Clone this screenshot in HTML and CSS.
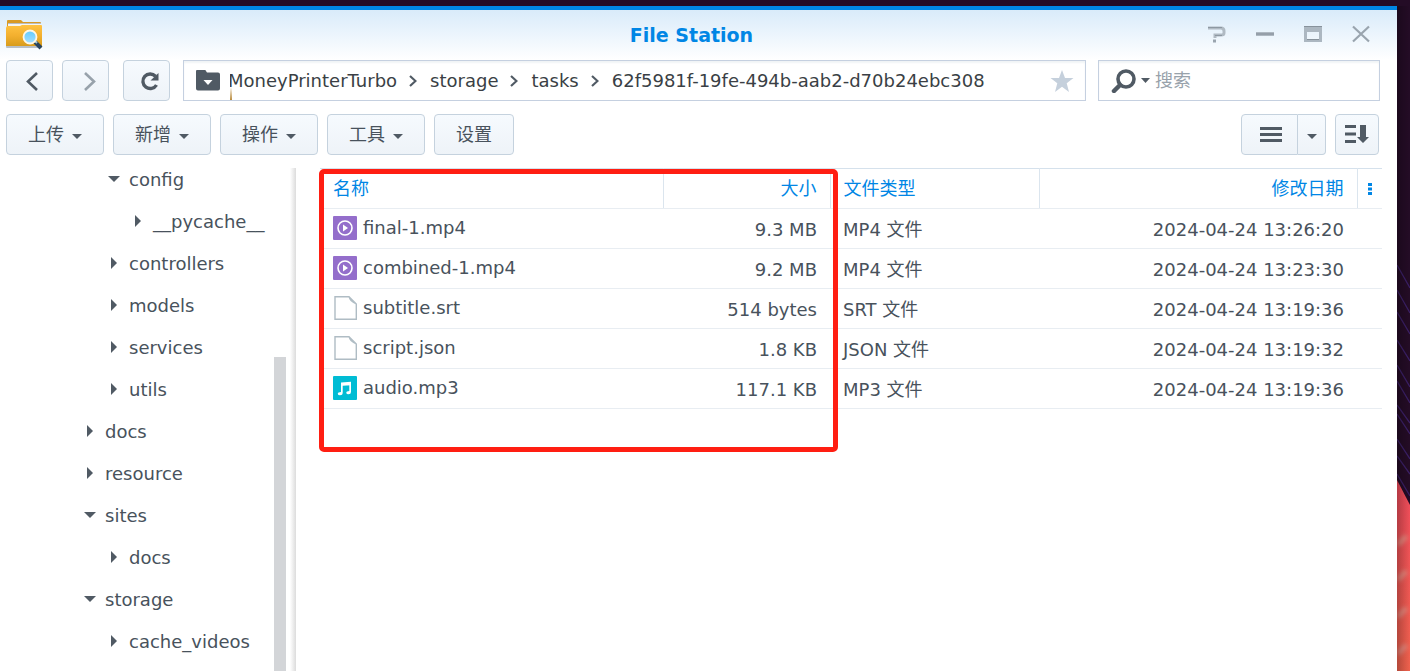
FILE: index.html
```html
<!DOCTYPE html>
<html lang="zh-CN">
<head>
<meta charset="utf-8">
<title>File Station</title>
<link rel="stylesheet" href="styles.css">
</head>
<body>
<div class="window">
  <header class="titlebar">
    <svg class="app-icon" width="38" height="34" viewBox="0 0 38 34">
      <defs>
        <linearGradient id="folder" x1="0" y1="0" x2="0" y2="1"><stop offset="0" stop-color="#ffc241"/><stop offset=".5" stop-color="#f3b02f"/><stop offset="1" stop-color="#d89c1c"/></linearGradient>
        <linearGradient id="lens" x1="0" y1="0" x2="0" y2="1"><stop offset="0" stop-color="#61caff"/><stop offset="1" stop-color="#a5dfff"/></linearGradient>
      </defs>
      <rect x="0" y="27" width="36" height="3" rx="1" fill="#8f97a0" opacity=".6"/>
      <path d="M1 3q0-1 1-1h13l2 2h17q1 0 1 1v6H1z" fill="#d99a24"/>
      <path d="M2 5h33v5H2z" fill="#b9bdc0"/><path d="M2 6h33v4H2z" fill="#f5f5f3"/>
      <path d="M0 10q0-2 2-2h12l2-1h19q1 0 1 1v20H0z" fill="url(#folder)"/>
      <path d="M29 24l6 6" stroke="#29445c" stroke-width="4"/>
      <path d="M28 22l3 3" stroke="#9fc7d4" stroke-width="2"/>
      <circle cx="24" cy="19" r="6.500" fill="url(#lens)" stroke="#fff7e5" stroke-width="1.800"/>
    </svg>
    <h1 class="title">File Station</h1>
    <div class="win-controls">
      <button aria-label="帮助"><svg width="20" height="20" viewBox="0 0 20 20"><path d="M1 3h13q3 0 3 3v2q0 2-3 2H8v3" fill="none" stroke="#b0bac3" stroke-width="3"/><path d="M6 14.500h3v3H6z" fill="#9aa5af"/><path d="M1 2.500h14M8 10.500h7" stroke="#8d98a2" stroke-width="1"/></svg></button>
      <button aria-label="最小化"><svg width="20" height="20" viewBox="0 0 20 20"><path d="M1 9h18" stroke="#aeb8c1" stroke-width="4"/><path d="M1 9h18" stroke="#8c97a1" stroke-width="1.500"/></svg></button>
      <button aria-label="最大化"><svg width="20" height="20" viewBox="0 0 20 20"><path d="M1 1h18v16H1zM4 7v7h12V7z" fill="#acb7c1" fill-rule="evenodd"/><path d="M1 1.500h18M4 14.500h12" stroke="#87929c"/></svg></button>
      <button aria-label="关闭"><svg width="20" height="20" viewBox="0 0 20 20"><path d="M2 1.500l16 15M18 1.500l-16 15" stroke="#99a4ae" stroke-width="2.200"/></svg></button>
    </div>
  </header>

  <nav class="navbar">
    <button class="btn square" aria-label="后退"><svg width="20" height="20" viewBox="0 0 20 20"><path d="M17 2l-9 8.500 9 8.500" fill="none" stroke="#505a64" stroke-width="2.600"/></svg></button>
    <button class="btn square" aria-label="前进"><svg width="20" height="20" viewBox="0 0 20 20"><path d="M9 2l9 8.500-9 8.500" fill="none" stroke="#98a2ab" stroke-width="2.600"/></svg></button>
    <button class="btn square reload" aria-label="刷新"><svg width="20" height="20" viewBox="0 0 20 20"><path d="M15.500 5.200A7.300 7.300 0 1 0 16.500 14" fill="none" stroke="#505a64" stroke-width="3.400"/><path d="M18.500 2v7.500h-8z" fill="#505a64"/></svg></button>
    <div class="path">
      <svg class="path-icon" width="24" height="22" viewBox="0 0 24 22"><path d="M0 1.500q0-2 2-2h7l2 3h11q2 0 2 2v14q0 2-2 2H2q-2 0-2-2z" fill="#505a64"/><path d="M7.500 10h9L12 15z" fill="#fff"/></svg>
      <div class="crumbs">
        <a href="#" class="first">MoneyPrinterTurbo</a>
        <svg class="chev" width="8" height="12" viewBox="0 0 8 12"><path d="M1 1l5.500 5L1 11" fill="none" stroke="#505a64" stroke-width="2.200"/></svg>
        <a href="#">storage</a>
        <svg class="chev" width="8" height="12" viewBox="0 0 8 12"><path d="M1 1l5.500 5L1 11" fill="none" stroke="#505a64" stroke-width="2.200"/></svg>
        <a href="#">tasks</a>
        <svg class="chev" width="8" height="12" viewBox="0 0 8 12"><path d="M1 1l5.500 5L1 11" fill="none" stroke="#505a64" stroke-width="2.200"/></svg>
        <a href="#">62f5981f-19fe-494b-aab2-d70b24ebc308</a>
      </div>
      <button class="star" aria-label="收藏"><svg width="24" height="24" viewBox="0 0 24 24"><path d="M12 1l3 8h8.500l-6.800 5.200L19 23l-7-5.200L5 23l2.300-8.800L.5 9H9z" fill="#c5d0dc"/></svg></button>
    </div>
    <div class="search">
      <svg width="26" height="24" viewBox="0 0 26 24"><circle cx="15" cy="10" r="8" fill="none" stroke="#505a64" stroke-width="3.600"/><path d="M9 16l-6 6" stroke="#505a64" stroke-width="4.500" stroke-linecap="round"/></svg>
      <svg width="9" height="5" viewBox="0 0 9 5"><path d="M0 0h9L4.500 5z" fill="#505a64"/></svg>
      <input type="text" placeholder="搜索" aria-label="搜索">
    </div>
  </nav>

  <div class="toolbar">
    <button class="btn menu">上传<i class="caret"></i></button>
    <button class="btn menu">新增<i class="caret"></i></button>
    <button class="btn menu">操作<i class="caret"></i></button>
    <button class="btn menu">工具<i class="caret"></i></button>
    <button class="btn setting">设置</button>
    <div class="split">
      <button class="btn view" aria-label="列表视图"><svg width="22" height="16" viewBox="0 0 22 16"><path d="M0 1.500h22M0 7.500h22M0 13.500h22" stroke="#505a64" stroke-width="3"/></svg></button>
      <button class="btn drop" aria-label="视图选项"><i class="caret"></i></button>
    </div>
    <button class="btn sort" aria-label="排序"><svg width="24" height="20" viewBox="0 0 24 20"><path d="M0 1.500h11M0 9h11M0 16.500h11" stroke="#505a64" stroke-width="3"/><path d="M15 0h6v12h3l-6 6-6-6h3z" fill="#505a64"/></svg></button>
  </div>

  <main class="content">
    <aside class="sidebar">
      <ul class="tree">
        <li class="l2 open"><i></i><a href="#">config</a></li>
        <li class="l3"><i></i><a href="#">__pycache__</a></li>
        <li class="l2"><i></i><a href="#">controllers</a></li>
        <li class="l2"><i></i><a href="#">models</a></li>
        <li class="l2"><i></i><a href="#">services</a></li>
        <li class="l2"><i></i><a href="#">utils</a></li>
        <li class="l1"><i></i><a href="#">docs</a></li>
        <li class="l1"><i></i><a href="#">resource</a></li>
        <li class="l1 open"><i></i><a href="#">sites</a></li>
        <li class="l2"><i></i><a href="#">docs</a></li>
        <li class="l1 open"><i></i><a href="#">storage</a></li>
        <li class="l2"><i></i><a href="#">cache_videos</a></li>
      </ul>
      <div class="scrollbar"></div>
    </aside>
    <section class="files">
      <table>
        <colgroup><col class="c-name"><col class="c-size"><col class="c-type"><col><col class="c-more"></colgroup>
        <thead>
          <tr><th>名称</th><th class="num">大小</th><th>文件类型</th><th class="num">修改日期</th><th class="more"><button aria-label="更多列"><svg width="4" height="12" viewBox="0 0 4 12"><path d="M0 0h4v3H0zM0 4.500h4v3H0zM0 9h4v3H0z" fill="#0086e5"/></svg></button></th></tr>
        </thead>
        <tbody>
          <tr><td><span class="name"><svg width="24" height="24" viewBox="0 0 24 24"><rect width="24" height="24" rx="1" fill="#946ecb"/><circle cx="12" cy="12" r="7" fill="none" stroke="#fff" stroke-width="1.600"/><path d="M10 8.500v7l5-3.500z" fill="#fff"/></svg>final-1.mp4</span></td><td class="num">9.3 MB</td><td>MP4 文件</td><td class="num" colspan="2">2024-04-24 13:26:20</td></tr>
          <tr><td><span class="name"><svg width="24" height="24" viewBox="0 0 24 24"><rect width="24" height="24" rx="1" fill="#946ecb"/><circle cx="12" cy="12" r="7" fill="none" stroke="#fff" stroke-width="1.600"/><path d="M10 8.500v7l5-3.500z" fill="#fff"/></svg>combined-1.mp4</span></td><td class="num">9.2 MB</td><td>MP4 文件</td><td class="num" colspan="2">2024-04-24 13:23:30</td></tr>
          <tr><td><span class="name"><svg width="24" height="24" viewBox="0 0 24 24"><path d="M2 .7h14l7.300 7.300v15.300H2z" fill="#fff" stroke="#afbcc4" stroke-width="1.400"/><path d="M15.500 .5Q16 6 23.500 8.500z" fill="#b0bec5"/></svg>subtitle.srt</span></td><td class="num">514 bytes</td><td>SRT 文件</td><td class="num" colspan="2">2024-04-24 13:19:36</td></tr>
          <tr><td><span class="name"><svg width="24" height="24" viewBox="0 0 24 24"><path d="M2 .7h14l7.300 7.300v15.300H2z" fill="#fff" stroke="#afbcc4" stroke-width="1.400"/><path d="M15.500 .5Q16 6 23.500 8.500z" fill="#b0bec5"/></svg>script.json</span></td><td class="num">1.8 KB</td><td>JSON 文件</td><td class="num" colspan="2">2024-04-24 13:19:32</td></tr>
          <tr><td><span class="name"><svg width="24" height="24" viewBox="0 0 24 24"><rect width="24" height="24" rx="1" fill="#00bcd4"/><path d="M8 6.500l10-.7v3.400l-8.300.6v7q0 2.500-2.700 2.500-2.200 0-2.200-1.600 0-1.700 3.200-1.700z" fill="#fff"/><path d="M16.300 8H18v8q0 2.300-2.500 2.300-2.200 0-2.200-1.600 0-1.700 3-1.700z" fill="#fff"/></svg>audio.mp3</span></td><td class="num">117.1 KB</td><td>MP3 文件</td><td class="num" colspan="2">2024-04-24 13:19:36</td></tr>
        </tbody>
      </table>
      <div class="marker"></div>
    </section>
  </main>
</div>
<div class="desktop">
  <svg viewBox="0 0 13 671" preserveAspectRatio="none">
    <defs>
      <linearGradient id="coral" x1="0" y1="0" x2="0" y2="1"><stop offset="0" stop-color="#f14b5c"/><stop offset="1" stop-color="#f0624d"/></linearGradient>
      <linearGradient id="edge"><stop offset="0" stop-color="#000" stop-opacity=".25"/><stop offset="1" stop-color="#000" stop-opacity="0"/></linearGradient>
      <filter id="soft" x="-1" y="-1" width="3" height="3"><feGaussianBlur stdDeviation="2"/></filter>
    </defs>
    <path d="M0 265l13 23M0 290l13 23M0 312l13 22M0 340l13 21M0 365l13 22M0 381l13 22M0 405l13 18M0 414l13 20M0 439l13 20M0 456l13 18M0 474l13 22" fill="none" stroke="#3c2068" stroke-width="1.300"/>
    <path d="M0 480l13 25v166H0z" fill="url(#coral)"/>
    <path d="M1 545l8-9M1 580l8-9M1 617l8-9M1 654l8-9" stroke="#e98b80" stroke-width="5" filter="url(#soft)"/>
    <path d="M0 6h13v665H0z" fill="url(#edge)"/>
  </svg>
</div>
</body>
</html>
```
FILE: styles.css
```css
* { box-sizing: border-box; }

body {
  margin: 0;
  display: flex;
  min-height: 100vh;
  background: #240c26;
  color: #48525c;
  font: 18px/24px "DejaVu Sans", "Noto Sans CJK SC", sans-serif;
}

a { color: inherit; text-decoration: none; }

button {
  margin: 0;
  padding: 0;
  border: 0;
  background: none;
  color: inherit;
  font: inherit;
}

svg { display: block; flex: none; }

.window {
  flex: 1;
  min-width: 0;
  margin-top: 6px;
  display: flex;
  flex-direction: column;
  border-top: 4px solid #0086e5;
  background: #fff linear-gradient(#d9ebfa, #fff) 0 0 / 100% 50px no-repeat;
}

.desktop { width: 13px; position: relative; }
.desktop svg { position: absolute; inset: 0; width: 100%; height: 100%; }

.titlebar {
  display: grid;
  grid-template-columns: 1fr auto 1fr;
  align-items: center;
  height: 50px;
  padding: 0 26px 0 6px;
}

.title {
  margin: 0;
  padding-left: 6px;
  color: #0086e5;
  font-size: 19px;
  line-height: 24px;
  font-weight: bold;
}

.win-controls {
  display: flex;
  justify-content: flex-end;
  gap: 28px;
}

.navbar {
  display: flex;
  height: 41px;
  padding: 0 17px 0 6px;
}

.btn {
  display: flex;
  align-items: center;
  justify-content: center;
  height: 41px;
  border: 1px solid #c5d2de;
  border-radius: 4px;
  background: linear-gradient(#f6fafe, #eef3f8);
}

.square { width: 47px; margin-right: 9px; }
.reload { margin: 0 13px 0 5px; padding-left: 6px; }

.path, .search {
  display: flex;
  align-items: center;
  border: 1px solid #c5d0e0;
  background: #fff;
  box-shadow: inset 0 2px 2px #f1f4f6;
}

.path { flex: 1; min-width: 0; margin-right: 12px; padding-left: 12px; }

.crumbs {
  flex: 1;
  min-width: 0;
  display: flex;
  align-items: center;
  height: 39px;
  margin-left: 10px;
  padding-left: 1px;
  overflow: hidden;
  white-space: nowrap;
  color: #3a3f45;
  background: linear-gradient(#fff, #b98b3d) 0 26px / 2px 13px no-repeat;
}

.crumbs .first { margin-left: -3px; }
.chev { margin: 0 13px 0 12px; }
.star { margin-right: 11px; }

.search { width: 282px; padding-left: 12px; }
.search input {
  flex: 1;
  min-width: 0;
  margin-left: 5px;
  padding: 0;
  border: 0;
  outline: 0;
  background: none;
  color: inherit;
  font: inherit;
}
.search svg + svg { margin-left: 4px; }
.search input::placeholder { color: #98a2ab; opacity: 1; }

.toolbar {
  display: flex;
  gap: 9px;
  padding: 13px 18px 13px 6px;
}

.caret {
  border: 5px solid transparent;
  border-top-color: #505a64;
  border-bottom: 0;
}

.menu { width: 98px; gap: 8px; }
.menu .caret, .drop .caret { margin-top: 4px; }
.setting { width: 80px; }
.split { display: flex; margin-left: auto; }
.view { width: 57px; border-radius: 4px 0 0 4px; padding-left: 3px; }
.drop { width: 28px; border-left: 0; border-radius: 0 4px 4px 0; }
.sort { width: 44px; }

.content { flex: 1; display: flex; }

.sidebar {
  width: 296px;
  display: flex;
  justify-content: space-between;
  overflow: hidden;
  padding-right: 10px;
  background: linear-gradient(to left, #dcdcdc, #fff) right / 6px 100% no-repeat;
}

.tree { margin: -9px 0 0; padding: 0; list-style: none; }
.tree li { display: flex; align-items: center; height: 42px; }
.tree i {
  margin: 0 12px 3px 3px;
  border: 6px solid transparent;
  border-left-color: #505a64;
  border-right: 0;
}
.tree .open i {
  margin: 0 9px 3px 0;
  border: 6px solid transparent;
  border-top-color: #505a64;
  border-bottom: 0;
}
.tree .l1 { padding-left: 84px; }
.tree .l2 { padding-left: 108px; }
.tree .l3 { padding-left: 132px; }

.scrollbar {
  width: 12px;
  margin-top: 189px;
  background: #d3d5d8;
}

.files {
  position: relative;
  flex: 1;
  min-width: 0;
  padding: 0 15px 0 24px;
}

table {
  width: 100%;
  table-layout: fixed;
  border-collapse: collapse;
  border-top: 1px solid #d5e1ec;
}
.c-name { width: 343px; }
.c-size { width: 167px; }
.c-type { width: 209px; }
.c-more { width: 25px; }

th, td {
  height: 40px;
  padding: 0 13px;
  border-bottom: 1px solid #e8edf2;
  text-align: left;
  white-space: nowrap;
}
th {
  border-right: 1px solid #dbe5ee;
  color: #0086e5;
  font-weight: normal;
}
td { padding-top: 2px; }
td:first-child { padding: 0 13px 1px; }
th.more { padding: 0 10px; border-right: 0; }
th.more button { display: block; }
.num { text-align: right; }
td.num[colspan] { padding-right: 38px; }
.name { display: flex; align-items: center; gap: 6px; }

.marker {
  position: absolute;
  top: 1px;
  left: 23px;
  width: 519px;
  height: 283px;
  border: 5px solid #ff1e12;
  border-radius: 5px;
}
```
